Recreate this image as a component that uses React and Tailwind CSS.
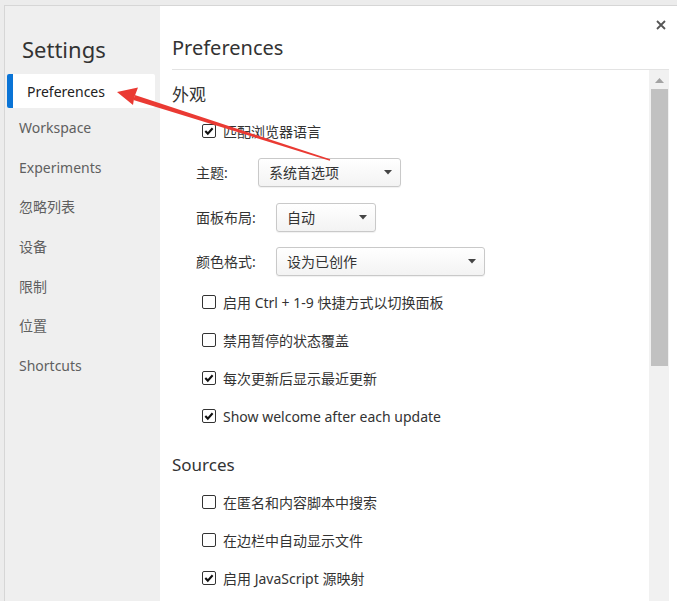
import React from "react";

const FONT = { fontFamily: '"Noto Sans", "Noto Sans CJK SC", sans-serif' };

const navItems = ["Workspace", "Experiments", "忽略列表", "设备", "限制", "位置", "Shortcuts"];

function Check({ checked, label }) {
  return (
    <div className="flex h-[38px] items-center pl-[30px]">
      <span className="flex h-[14px] w-[14px] items-center justify-center rounded-[2px] border border-[#333] bg-white">
        {checked && (
          <svg width="12" height="12" viewBox="0 0 12 12">
            <path d="M2.3 6 L4.8 8.6 L9.6 3.2" fill="none" stroke="#111" strokeWidth="2.1" />
          </svg>
        )}
      </span>
      <span className="ml-[7px] text-[14px] text-[#333]">{label}</span>
    </div>
  );
}

function Select({ label, labelW, value, w, h }) {
  return (
    <div className="flex items-center pl-[24px]" style={{ height: h }}>
      <span className="text-[14px] text-[#333]" style={{ width: labelW }}>
        {label}
      </span>
      <div
        className="flex h-[29px] items-center justify-between rounded-[3px] border border-[#c9c9c9] bg-gradient-to-b from-white to-[#f3f3f3] pl-[10px] pr-[8px] shadow-[0_1px_1px_rgba(0,0,0,0.06)]"
        style={{ width: w }}
      >
        <span className="text-[14px] text-[#333]">{value}</span>
        <svg width="8" height="5" viewBox="0 0 8 5">
          <path d="M0 0 H8 L4 4.5 Z" fill="#444" />
        </svg>
      </div>
    </div>
  );
}

export default function App() {
  return (
    <div className="relative h-[601px] w-[677px] overflow-hidden bg-[#ececec] pl-[4px] pt-[5px]" style={FONT}>
      <div className="flex h-full border-l border-t border-[#d6d6d6] bg-white">
        {/* sidebar */}
        <div className="w-[155px] shrink-0 bg-[#efefef] pt-[28px]">
          <div className="pl-[17px] text-[22px] leading-[30px] text-[#333]">Settings</div>
          <div className="ml-[2px] mr-[5px] mt-[10px] flex h-[34px] items-center rounded-[2px] bg-white">
            <span className="h-full w-[6px] rounded-l-[2px] bg-[#0a74d6]" />
            <span className="ml-[14px] text-[14px] text-[#222]">Preferences</span>
          </div>
          {navItems.map((n) => (
            <div key={n} className="flex h-[39.6px] items-center pl-[14px] text-[14px] text-[#5f5f5f]">
              {n}
            </div>
          ))}
        </div>

        {/* content */}
        <div className="flex min-w-0 flex-1 flex-col">
          <div className="ml-[12px] mr-[8px] flex h-[64px] shrink-0 items-start justify-between border-b border-[#e3e3e3]">
            <div className="mt-[28px] text-[20px] leading-[28px] text-[#333]">Preferences</div>
            <svg className="mr-[3px] mt-[14px]" width="10" height="10" viewBox="0 0 10 10">
              <path d="M1 1 L9 9 M9 1 L1 9" stroke="#555" strokeWidth="1.8" />
            </svg>
          </div>
          <div className="ml-[12px] mr-[8px] flex min-h-0 flex-1">
            <div className="min-w-0 flex-1 overflow-hidden">
              <div className="mt-[8px] flex h-[34px] items-center text-[17px] text-[#333]">外观</div>
              <Check checked label="匹配浏览器语言" />
              <Select label="主题:" labelW={62} value="系统首选项" w={143} h={45} />
              <Select label="面板布局:" labelW={80} value="自动" w={100} h={44} />
              <Select label="颜色格式:" labelW={80} value="设为已创作" w={209} h={44} />
              <Check label="启用 Ctrl + 1-9 快捷方式以切换面板" />
              <Check label="禁用暂停的状态覆盖" />
              <Check checked label="每次更新后显示最近更新" />
              <Check checked label="Show welcome after each update" />
              <div className="mt-[12px] flex h-[36px] items-center text-[17px] text-[#333]">Sources</div>
              <Check label="在匿名和内容脚本中搜索" />
              <Check label="在边栏中自动显示文件" />
              <Check checked label="启用 JavaScript 源映射" />
            </div>
            {/* scrollbar */}
            <div className="flex w-[20px] shrink-0 flex-col items-center bg-[#f1f1f1]">
              <svg className="mt-[8px]" width="9" height="5" viewBox="0 0 9 5">
                <path d="M0 5 L4.5 0 L9 5 Z" fill="#a3a3a3" />
              </svg>
              <div className="mt-[6px] h-[277px] w-[17px] bg-[#c1c1c1]" />
            </div>
          </div>
        </div>
      </div>

      {/* red annotation arrow */}
      <svg className="pointer-events-none absolute inset-0" width="677" height="601" viewBox="0 0 677 601">
        <polygon points="134.8,95.1 330.2,159.3 329.8,160.7 133.4,99.9" fill="#ea3a33" />
        <polygon points="117,92 138,87.5 134.2,97.5 133,105" fill="#ea3a33" />
      </svg>
    </div>
  );
}
